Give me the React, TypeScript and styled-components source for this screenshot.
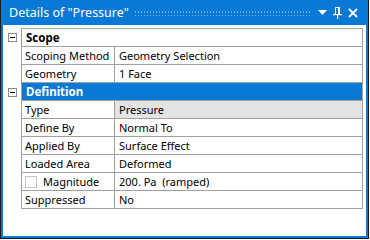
import { createGlobalStyle } from 'styled-components';
import styled from 'styled-components';

const GlobalStyle = createGlobalStyle`
  body {
    margin: 0;
    background: #ffffff;
    font-family: "Noto Sans", "Open Sans", sans-serif;
  }
`;

const Window = styled.div`
  width: 369px;
  height: 239px;
  box-sizing: border-box;
  background: #0a79d6;
  border: 1px solid #1b1b1b;
  border-top: none;
  display: flex;
  flex-direction: column;
`;

const TitleBar = styled.div`
  height: 25px;
  display: flex;
  align-items: center;
  padding: 0 8px 0 8px;
  color: #ffffff;
  font-size: 12.5px;
`;

const TitleText = styled.span`
  white-space: nowrap;
`;

const Grip = styled.div`
  flex: 1;
  height: 6px;
  margin: 1px 4px 0 5px;
  background-image: radial-gradient(circle, #6fb3ee 0.7px, transparent 0.9px);
  background-size: 3px 4px;
`;

const TitleButton = styled.div`
  width: 15px;
  height: 15px;
  display: flex;
  align-items: center;
  justify-content: center;
`;

const Body = styled.div`
  flex: 1;
  margin: 0 2px 2px 2px;
  background: #ffffff;
  padding: 3px 3px 0 0;
  font-size: 11px;
  color: #000000;
`;

const Row = styled.div`
  display: flex;
`;

const Gutter = styled.div`
  width: 17px;
  display: flex;
  align-items: center;
  justify-content: center;
  padding-left: 1px;
`;

const ExpandBox = styled.div`
  width: 7px;
  height: 7px;
  border: 1px solid #8a8a8a;
  background: #ffffff;
  display: flex;
  align-items: center;
  justify-content: center;
  &::after {
    content: '';
    width: 5px;
    height: 1px;
    background: #000000;
  }
`;

const Cells = styled.div<{ $first?: boolean; $header?: boolean; $selected?: boolean }>`
  flex: 1;
  display: grid;
  grid-template-columns: ${(p) => (p.$header ? '1fr' : '93px 1fr')};
  border: 1px solid #a0a0a0;
  border-top: ${(p) => (p.$first ? '1px solid #a0a0a0' : 'none')};
  background: ${(p) => (p.$selected ? '#0a79d6' : '#ffffff')};
`;

const Cell = styled.div<{ $label?: boolean; $shaded?: boolean; $bold?: boolean; $light?: boolean }>`
  height: 17px;
  line-height: 17px;
  box-sizing: border-box;
  padding-left: ${(p) => (p.$label ? '3px' : '4px')};
  border-right: ${(p) => (p.$label ? '1px solid #a0a0a0' : 'none')};
  background: ${(p) => (p.$shaded ? '#e4e4e4' : 'transparent')};
  font-weight: ${(p) => (p.$bold ? 700 : 400)};
  font-size: ${(p) => (p.$bold ? '11.5px' : '11px')};
  color: ${(p) => (p.$light ? '#ffffff' : '#000000')};
  white-space: pre;
  overflow: hidden;
  display: flex;
  align-items: center;
`;

const Check = styled.span`
  width: 10px;
  height: 10px;
  border: 1px solid #c4c4c4;
  margin-right: 6px;
  flex-shrink: 0;
`;

type Prop = { label: string; value: string; shaded?: boolean; check?: boolean };

const scope: Prop[] = [
  { label: 'Scoping Method', value: 'Geometry Selection' },
  { label: 'Geometry', value: '1 Face' },
];

const definition: Prop[] = [
  { label: 'Type', value: 'Pressure', shaded: true },
  { label: 'Define By', value: 'Normal To' },
  { label: 'Applied By', value: 'Surface Effect' },
  { label: 'Loaded Area', value: 'Deformed' },
  { label: 'Magnitude', value: '200. Pa  (ramped)', check: true },
  { label: 'Suppressed', value: 'No' },
];

const PropRow = ({ item }: { item: Prop }) => (
  <Row>
    <Gutter />
    <Cells>
      <Cell $label>
        {item.check && <Check />}
        {item.label}
      </Cell>
      <Cell $shaded={item.shaded}>{item.value}</Cell>
    </Cells>
  </Row>
);

const App = () => {
  return (
    <>
      <GlobalStyle />
      <Window>
        <TitleBar>
          <TitleText>Details of "Pressure"</TitleText>
          <Grip />
          <TitleButton>
            <svg width="9" height="5" viewBox="0 0 9 5">
              <path d="M0 0 H9 L4.5 5 Z" fill="#ffffff" />
            </svg>
          </TitleButton>
          <TitleButton>
            <svg width="9" height="12" viewBox="0 0 9 12">
              <path d="M2.5 0.5 H6.5 V7 M2.5 0.5 V7" stroke="#ffffff" strokeWidth="1" fill="none" />
              <rect x="5" y="0.5" width="2" height="6.5" fill="#ffffff" />
              <rect x="0" y="7" width="9" height="1.2" fill="#ffffff" />
              <rect x="4" y="8" width="1.2" height="4" fill="#ffffff" />
            </svg>
          </TitleButton>
          <TitleButton>
            <svg width="10" height="10" viewBox="0 0 10 10">
              <path d="M1 1 L9 9 M9 1 L1 9" stroke="#ffffff" strokeWidth="1.8" />
            </svg>
          </TitleButton>
        </TitleBar>
        <Body>
          <Row>
            <Gutter>
              <ExpandBox />
            </Gutter>
            <Cells $first $header>
              <Cell $bold>Scope</Cell>
            </Cells>
          </Row>
          {scope.map((item) => (
            <PropRow key={item.label} item={item} />
          ))}
          <Row>
            <Gutter>
              <ExpandBox />
            </Gutter>
            <Cells $header $selected>
              <Cell $bold $light>
                Definition
              </Cell>
            </Cells>
          </Row>
          {definition.map((item) => (
            <PropRow key={item.label} item={item} />
          ))}
        </Body>
      </Window>
    </>
  );
};

export default App;
